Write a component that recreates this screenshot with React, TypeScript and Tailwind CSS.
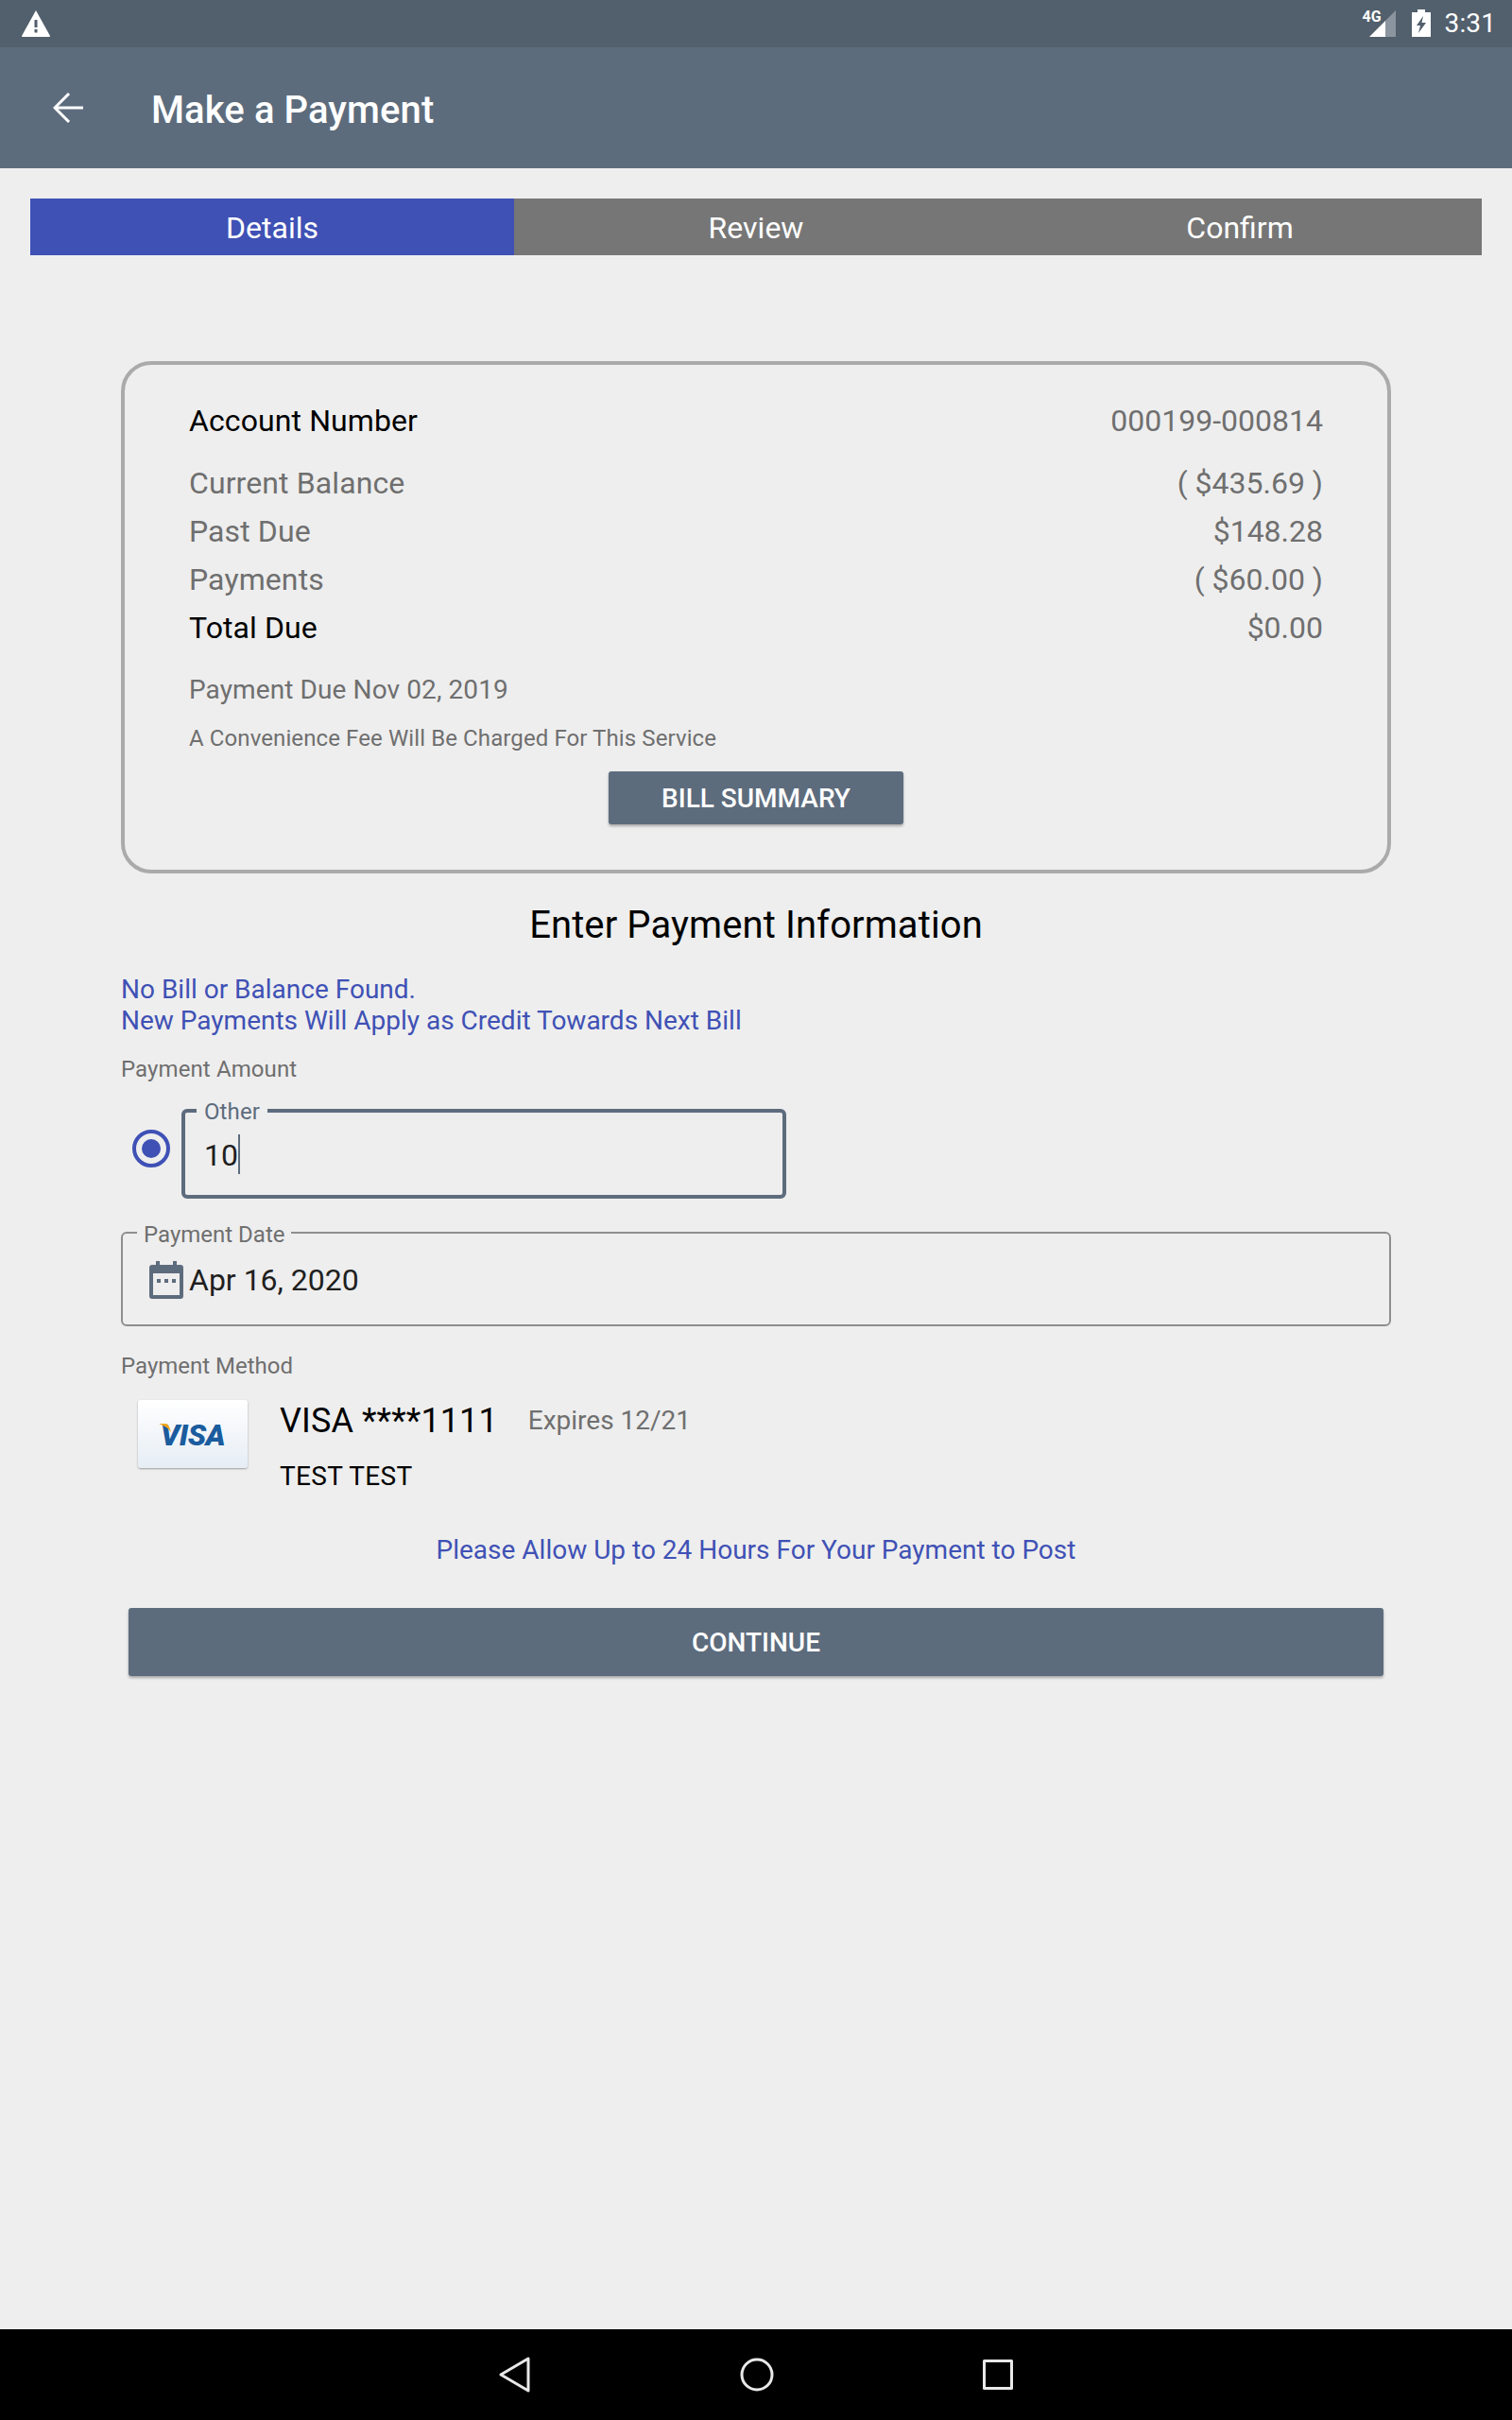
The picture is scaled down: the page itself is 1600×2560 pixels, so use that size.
import React from "react";

function Row({ label, value, dark }: { label: string; value: string; dark?: boolean }) {
  return (
    <div className="flex h-[51px] items-center justify-between pt-[1px] text-[32px]">
      <span className={dark ? "text-black" : "text-[#6f6f6f]"}>{label}</span>
      <span className="tracking-normal text-[#6f6f6f]">{value}</span>
    </div>
  );
}

export default function App() {
  return (
    <div className="flex h-[2560px] w-[1600px] flex-col bg-[#eeeeee] font-['Roboto',sans-serif] tracking-[0.1px]">
      <div className="flex h-[50px] items-center justify-between bg-[#525f6c] pl-[22px] pr-[17px]">
        <svg width="32" height="28" viewBox="0 0 32 28">
          <path d="M16 0 L31 27 Q31 28 30 28 L2 28 Q1 28 1 27 Z" fill="#fff" />
          <rect x="14.5" y="10" width="3" height="8" fill="#525f6c" />
          <rect x="14.5" y="20" width="3" height="3.5" fill="#525f6c" />
        </svg>
        <div className="flex items-center">
          <div className="relative h-[40px] w-[28px]">
            <svg className="absolute left-0 top-[6px]" width="28" height="28" viewBox="0 0 28 28">
              <path d="M0 28 L17 11 L17 28 Z" fill="#fff" />
              <path d="M17 28 L17 11 L28 0 L28 28 Z" fill="#8b959f" />
            </svg>
            <span className="absolute left-[-7px] top-[3px] text-[16px] font-bold leading-[20px] tracking-normal text-white">4G</span>
          </div>
          <svg className="ml-[17px]" width="20" height="30" viewBox="0 0 20 30">
            <path d="M6 0 H14 V3 H20 V29 H0 V3 H6 Z" fill="#fff" />
            <path d="M12 7 L5 17 H9 L7 25 L15 14 H10.5 Z" fill="#525f6c" />
          </svg>
          <span className="ml-[15px] text-[28px] leading-[30px] text-white">3:31</span>
        </div>
      </div>

      <div className="flex h-[128px] items-center bg-[#5d6c7d] pl-[56px] text-white">
        <svg width="32" height="32" viewBox="0 0 32 32" fill="none" stroke="#fff" strokeWidth="3">
          <path d="M32 16 H2" />
          <path d="M17 1 L2 16 L17 31" />
        </svg>
        <h1 className="ml-[72px] mt-[6px] text-[40px] font-medium">Make a Payment</h1>
      </div>

      <div className="mx-[32px] mt-[32px] grid h-[60px] grid-cols-3 bg-[#767676] text-[32px] tracking-normal text-white">
        <div className="flex items-center justify-center bg-[#3f51b5] pt-[2px]">Details</div>
        <div className="flex items-center justify-center pt-[2px]">Review</div>
        <div className="flex items-center justify-center pt-[2px]">Confirm</div>
      </div>

      <div className="mx-[128px] mt-[112px] flex flex-col">
        <div className="flex h-[542px] flex-col rounded-[32px] border-4 border-[#aaaaaa] px-[68px] pt-[33px]">
          <div className="mb-[15px]">
            <Row label="Account Number" value="000199-000814" dark />
          </div>
          <Row label="Current Balance" value="( $435.69 )" />
          <Row label="Past Due" value="$148.28" />
          <Row label="Payments" value="( $60.00 )" />
          <Row label="Total Due" value="$0.00" dark />
          <div className="mt-[22px] text-[28px] leading-[38px] text-[#6f6f6f]">Payment Due Nov 02, 2019</div>
          <div className="mt-[14px] text-[24px] leading-[36px] text-[#6f6f6f]">A Convenience Fee Will Be Charged For This Service</div>
          <button className="mx-auto mt-[17px] flex h-[56px] w-[312px] items-center justify-center rounded-[3px] bg-[#5d6c7d] pt-[2px] text-[28px] font-medium tracking-normal text-white shadow-[0_2px_3px_rgba(0,0,0,0.3)]">
            BILL SUMMARY
          </button>
        </div>

        <h2 className="mt-[29px] text-center text-[40px] leading-[52px] text-black">Enter Payment Information</h2>

        <div className="mt-[25px] text-[28px] leading-[33px] tracking-normal text-[#3f51b5]">
          <div>No Bill or Balance Found.</div>
          <div>New Payments Will Apply as Credit Towards Next Bill</div>
        </div>

        <div className="mt-[19px] text-[24px] leading-[32px] text-[#6f6f6f]">Payment Amount</div>

        <div className="mt-[26px] flex items-start">
          <div className="ml-[12px] mt-[22px] flex h-[40px] w-[40px] items-center justify-center rounded-full border-4 border-[#3f51b5]">
            <div className="h-[20px] w-[20px] rounded-full bg-[#3f51b5]" />
          </div>
          <div className="relative ml-[12px] flex h-[95px] w-[640px] items-center rounded-[6px] border-4 border-[#5d6c7d] pl-[20px]">
            <span className="absolute left-[12px] top-[-15px] bg-[#eeeeee] px-[8px] text-[24px] leading-[28px] text-[#5d6c7d]">Other</span>
            <span className="mt-[2px] text-[32px] leading-[40px] text-[#1f1f1f]">10</span>
            <span className="h-[42px] w-[2px] bg-[#5d6c7d]" />
          </div>
        </div>

        <div className="relative mt-[35px] flex h-[100px] items-center rounded-[6px] border-2 border-[#8e8e8e] pl-[27px]">
          <span className="absolute left-[15px] top-[-13px] bg-[#eeeeee] px-[7px] text-[24px] leading-[28px] tracking-normal text-[#6f6f6f]">Payment Date</span>
          <svg width="36" height="40" viewBox="0 0 36 40" className="ml-[1px] mt-[1px]">
            <path d="M7 0 H11 V4 H25 V0 H29 V4 H33 Q36 4 36 7 V37 Q36 40 33 40 H3 Q0 40 0 37 V7 Q0 4 3 4 H7 Z" fill="#5d6c7d" />
            <rect x="4" y="13" width="28" height="23" fill="#eeeeee" />
            <rect x="8" y="19" width="4" height="4" fill="#5d6c7d" />
            <rect x="16" y="19" width="4" height="4" fill="#5d6c7d" />
            <rect x="24" y="19" width="4" height="4" fill="#5d6c7d" />
          </svg>
          <span className="ml-[6px] mt-[1px] text-[32px] tracking-normal text-[#1f1f1f]">Apr 16, 2020</span>
        </div>

        <div className="mt-[26px] text-[24px] leading-[32px] tracking-normal text-[#6f6f6f]">Payment Method</div>

        <div className="mt-[20px] flex items-start">
          <div className="relative ml-[18px] flex h-[72px] w-[116px] items-center justify-center rounded-[3px] bg-gradient-to-b from-white to-[#e6edf5] shadow-[0_1px_2px_rgba(0,0,0,0.35)]">
            <svg className="absolute left-[22px] top-[25px]" width="14" height="10" viewBox="0 0 14 10">
              <path d="M0 0 H8 Q11 1 13 9 Q9 3 0 0 Z" fill="#f4a51c" />
            </svg>
            <span className="mt-[2px] text-[32px] font-black italic leading-none tracking-[-0.5px] text-[#1a5c9e]">VISA</span>
          </div>
          <div className="ml-[34px] -mt-[1px] flex flex-col">
            <div className="flex h-[46px] items-center">
              <span className="text-[36px] text-black">VISA ****1111</span>
              <span className="ml-[32px] text-[28px] tracking-normal text-[#6f6f6f]">Expires 12/21</span>
            </div>
            <div className="mt-[18px] text-[28px] leading-[36px] tracking-[0.3px] text-black">TEST TEST</div>
          </div>
        </div>

        <div className="mt-[42px] text-center text-[28px] leading-[36px] tracking-normal text-[#3f51b5]">Please Allow Up to 24 Hours For Your Payment to Post</div>

        <button className="mx-[8px] mt-[43px] flex h-[72px] items-center justify-center rounded-[3px] bg-[#5d6c7d] pt-[2px] text-[28px] font-medium tracking-normal text-white shadow-[0_2px_3px_rgba(0,0,0,0.3)]">
          CONTINUE
        </button>
      </div>

      <div className="mt-auto flex h-[96px] items-center justify-center bg-black">
        <svg width="34" height="38" viewBox="0 0 34 38" fill="none" stroke="#e8e8e8" strokeWidth="3" strokeLinejoin="round" className="mr-[221px]">
          <path d="M31 2 V36 L2 19 Z" />
        </svg>
        <svg width="36" height="36" viewBox="0 0 36 36" fill="none" stroke="#e8e8e8" strokeWidth="3">
          <circle cx="18" cy="18" r="16" />
        </svg>
        <svg width="32" height="32" viewBox="0 0 32 32" fill="none" stroke="#e8e8e8" strokeWidth="3" strokeLinejoin="round" className="ml-[221px]">
          <rect x="1.5" y="1.5" width="29" height="29" />
        </svg>
      </div>
    </div>
  );
}
